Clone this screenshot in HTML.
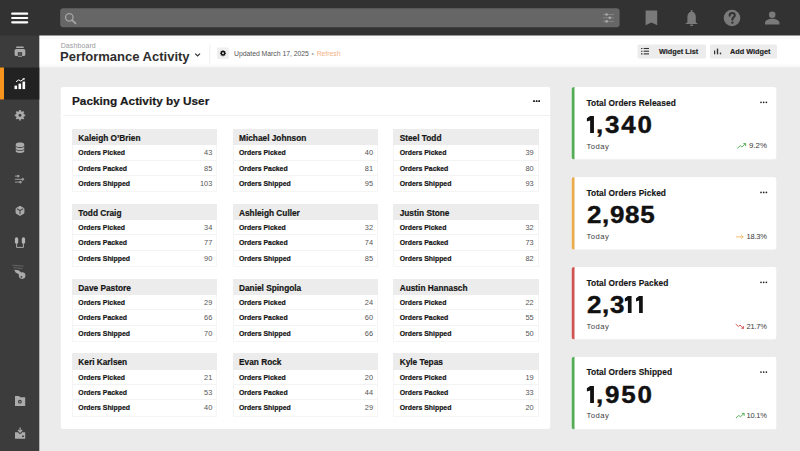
<!DOCTYPE html>
<html><head><meta charset="utf-8">
<style>
*{margin:0;padding:0;box-sizing:border-box}
html,body{width:800px;height:451px;overflow:hidden;background:#ebebeb;font-family:"Liberation Sans",sans-serif;color:#1a1a1a}
.abs{position:absolute}
#top{left:0;top:0;width:800px;height:35.5px;background:#323232}
#side{left:0;top:35.5px;width:39.5px;height:416px;background:#3c3c3c}
#act{left:0;top:67.5px;width:39.5px;height:32px;background:#222222}
#actb{left:0;top:67.5px;width:4px;height:32px;background:#f7941d}
#hdr{left:39.5px;top:35.5px;width:761px;height:32px;background:linear-gradient(to bottom,#fff 0,#f9f9f9 2.5px,#fff 4px,#fff 28px,#f5f5f5 32px)}
#search{left:60.2px;top:8.2px;width:559.4px;height:19px;background:#666666;border-radius:3px}
.card{background:#fff;border-radius:2px}
#pack{left:61px;top:87px;width:489px;height:342px}
.ptitle{left:72px;top:94.2px;font-size:11.8px;font-weight:bold;color:#1a1a1a;white-space:nowrap;letter-spacing:0;-webkit-text-stroke:0.2px #1a1a1a}
.tbl{width:145.5px;border:1px solid #f5f5f5;border-top:0}
.th{height:16.3px;background:#ececec;font-size:8.3px;font-weight:bold;padding-left:6.5px;line-height:18.6px;white-space:nowrap;color:#151515;margin:0 -1px;-webkit-text-stroke:0.2px #151515}
.tr{height:15.4px;border-bottom:1px solid #f3f3f3;font-size:6.9px;line-height:15.4px;padding:0 4px 0 5.5px;display:flex;justify-content:space-between;white-space:nowrap}
.tr:last-child{border-bottom:0}
.tr b{font-weight:bold;color:#151515;-webkit-text-stroke:0.2px #151515;transform:translateY(0.3px)}
.tr span{font-weight:normal;color:#555;font-size:7.4px;transform:translateY(0.3px)}
.kpi{left:571.5px;width:205px;height:72.6px;border-left:3px solid transparent;background:none!important}
.kt{position:absolute;left:12px;top:10.7px;font-size:8.35px;font-weight:bold;white-space:nowrap;letter-spacing:0.07px;color:#151515;-webkit-text-stroke:0.15px #151515}
.kv{position:absolute;left:12.5px;top:25px;font-size:23.2px;font-weight:bold;white-space:nowrap;color:#111;letter-spacing:0.6px;-webkit-text-stroke:0.4px #111;transform:scaleX(1.12);transform-origin:0 0}
.kd{position:absolute;left:12px;top:54.6px;font-size:7.7px;color:#3f3f3f;letter-spacing:0.45px}
.kp{position:absolute;right:9.6px;top:54.6px;font-size:7.5px;color:#3a3a3a;white-space:nowrap;letter-spacing:-0.15px}
.kdots{position:absolute;right:10px;top:14px}
svg{position:absolute;left:0;top:0;overflow:visible}
.one{display:inline-block;width:9.6px;height:17px;position:relative;font-style:normal;vertical-align:baseline;margin-bottom:-0.3px}
.one svg{position:absolute;left:0;top:0;fill:#111}
</style></head><body>
<svg width="800" height="451" viewBox="0 0 800 451">
 <defs><linearGradient id="hg" x1="0" y1="0" x2="0" y2="1">
  <stop offset="0.1467" stop-color="#fff"/><stop offset="0.2133" stop-color="#f9f9f9"/><stop offset="0.253" stop-color="#fff"/><stop offset="0.893" stop-color="#fff"/><stop offset="1" stop-color="#f4f4f4"/>
 </linearGradient><clipPath id="k0"><rect x="571.5" y="87" width="205" height="72.6" rx="3"/></clipPath><clipPath id="k1"><rect x="571.5" y="177.1" width="205" height="72.6" rx="3"/></clipPath><clipPath id="k2"><rect x="571.5" y="267" width="205" height="72.6" rx="3"/></clipPath><clipPath id="k3"><rect x="571.5" y="356.8" width="205" height="72.6" rx="3"/></clipPath></defs>
 <rect x="30" y="30" width="770" height="37.5" fill="url(#hg)"/>
 <rect x="0" y="30" width="39.3" height="421" fill="#3c3c3c"/>
 <rect x="0" y="0" width="800" height="35.5" fill="#323232"/>
 <rect x="0" y="67.5" width="39.3" height="32" fill="#222222"/>
 <rect x="0" y="67.5" width="4" height="32" fill="#f7941d"/>
 <rect x="60.2" y="8.2" width="559.4" height="19" rx="3" fill="#666666"/>
 <rect x="60.8" y="87" width="489.4" height="342.1" rx="2" fill="#fff"/>
 <g clip-path="url(#k0)"><rect x="571.5" y="87" width="205" height="72.6" fill="#fff"/><rect x="571.5" y="87" width="3" height="72.6" fill="#52ad55"/></g>
 <g clip-path="url(#k1)"><rect x="571.5" y="177.1" width="205" height="72.6" fill="#fff"/><rect x="571.5" y="177.1" width="3" height="72.6" fill="#ebab4c"/></g>
 <g clip-path="url(#k2)"><rect x="571.5" y="267" width="205" height="72.6" fill="#fff"/><rect x="571.5" y="267" width="3" height="72.6" fill="#cf5350"/></g>
 <g clip-path="url(#k3)"><rect x="571.5" y="356.8" width="205" height="72.6" fill="#fff"/><rect x="571.5" y="356.8" width="3" height="72.6" fill="#52ad55"/></g>
</svg>

<svg width="800" height="451" viewBox="0 0 800 451">
 <!-- hamburger -->
 <g stroke="#fff" stroke-width="2.2" stroke-linecap="round">
  <line x1="12.2" y1="13.7" x2="27.2" y2="13.7"/><line x1="12.2" y1="18" x2="27.2" y2="18"/><line x1="12.2" y1="22.3" x2="27.2" y2="22.3"/>
 </g>
 <!-- search icon -->
 <g stroke="#a5a5a5" fill="none" stroke-width="1.3"><circle cx="69.3" cy="17.3" r="3.75"/><line x1="72.1" y1="20.1" x2="75.5" y2="23.4" stroke-width="1.7" stroke-linecap="round"/></g>
 <!-- filter icon -->
 <g stroke="#8a8a8a" stroke-width="0.8" fill="#a8a8a8">
  <line x1="603" y1="14.5" x2="614" y2="14.5"/><line x1="603" y1="17.8" x2="614" y2="17.8"/><line x1="603" y1="21.4" x2="614" y2="21.4"/>
  <circle cx="606.6" cy="14.5" r="1.35" stroke="none"/><circle cx="609.8" cy="17.8" r="1.35" stroke="none"/><circle cx="606.6" cy="21.4" r="1.35" stroke="none"/>
 </g>
 <!-- bookmark -->
 <path d="M645.6 10.4 H657.2 V25.3 L651.4 22.5 L645.6 25.3 Z" fill="#7a7a7a"/>
 <!-- bell -->
 <circle cx="691.6" cy="11" r="1" fill="#7a7a7a"/>
 <path d="M687.4 22.2 V16.8 C687.4 13.9 689.1 11.8 691.6 11.8 C694.1 11.8 695.8 13.9 695.8 16.8 V22.2 L698 24 H685.2 L687.4 22.2 Z" fill="#7a7a7a"/>
 <rect x="690.1" y="24.6" width="3" height="1.3" rx="0.6" fill="#7a7a7a"/>
 <!-- help -->
 <circle cx="732" cy="18" r="8.3" fill="#7a7a7a"/>
 <path d="M729.6 15.7 c0 -1.7 1.1 -2.7 2.6 -2.7 c1.5 0 2.6 1 2.6 2.4 c0 1.8 -2.4 2.1 -2.4 3.9 v0.4" stroke="#323232" stroke-width="2" fill="none" stroke-linecap="round"/>
 <circle cx="732.4" cy="22.7" r="1.15" fill="#323232"/>
 <!-- user -->
 <circle cx="772.2" cy="14.7" r="3.3" fill="#7a7a7a"/>
 <path d="M765 24.6 v-1.6 c0 -2.6 3.2 -4.3 7.2 -4.3 c4 0 7.2 1.7 7.2 4.3 v1.6 z" fill="#7a7a7a"/>

 <!-- sidebar icons -->
 <g fill="#ababab">
  <!-- printer -->
  <rect x="16.2" y="46.4" width="7.5" height="1.7" rx="0.4"/>
  <rect x="14.6" y="49" width="10.7" height="7" rx="1.6"/>
  <rect x="17.8" y="52.2" width="4.3" height="4.2" fill="#3c3c3c"/>
  <rect x="18.6" y="53.6" width="2.7" height="0.8" fill="#777"/>
  <rect x="17.8" y="55.8" width="4.3" height="0.9"/>
  <!-- gear -->
  <path d="M19.16 111.29 L19.13 110.07 L20.87 110.07 L20.84 111.29 L22.24 111.87 L23.08 110.99 L24.31 112.22 L23.43 113.06 L24.01 114.46 L25.23 114.43 L25.23 116.17 L24.01 116.14 L23.43 117.54 L24.31 118.38 L23.08 119.61 L22.24 118.73 L20.84 119.31 L20.87 120.53 L19.13 120.53 L19.16 119.31 L17.76 118.73 L16.92 119.61 L15.69 118.38 L16.57 117.54 L15.99 116.14 L14.77 116.17 L14.77 114.43 L15.99 114.46 L16.57 113.06 L15.69 112.22 L16.92 110.99 L17.76 111.87 Z M21.50 115.30 A1.5 1.5 0 1 0 18.50 115.30 A1.5 1.5 0 1 0 21.50 115.30 Z" fill-rule="evenodd"/>
  <!-- database -->
  <path d="M15.75 144.1 c0 -1 1.9 -1.7 4.25 -1.7 c2.35 0 4.25 0.7 4.25 1.7 v1.4 c0 1 -1.9 1.6 -4.25 1.6 c-2.35 0 -4.25 -0.6 -4.25 -1.6 z"/>
  <path d="M15.75 146.3 c0 1 1.9 1.6 4.25 1.6 c2.35 0 4.25 -0.6 4.25 -1.6 v2.1 c0 1 -1.9 1.6 -4.25 1.6 c-2.35 0 -4.25 -0.6 -4.25 -1.6 z"/>
  <path d="M15.75 149.2 c0 1 1.9 1.6 4.25 1.6 c2.35 0 4.25 -0.6 4.25 -1.6 v2.1 c0 1 -1.9 1.6 -4.25 1.6 c-2.35 0 -4.25 -0.6 -4.25 -1.6 z"/>
  <!-- cube -->
  <path d="M20 206.3 L23.9 208.5 V213.2 L20 215.4 L16.1 213.2 V208.5 Z" stroke="#ababab" stroke-width="1" stroke-linejoin="round"/>
  <path d="M16.9 208.8 L20 210.5 L23.1 208.8 M20 210.5 V214.3" stroke="#4a4a4a" stroke-width="1.1" fill="none"/>
  <!-- magnet -->
  <rect x="14.9" y="237.3" width="3.3" height="6.5" rx="1.65" fill="#b5b5b5"/>
  <rect x="21.8" y="237.3" width="3.3" height="6.5" rx="1.65" fill="#b5b5b5"/>
  <path d="M16.6 243.4 V247.4 H23.4 V243.4" stroke="#ababab" stroke-width="1" fill="none"/>
  <!-- folder -->
  <path d="M15 396 h4 l1.2 1.2 h5 v8.8 h-10.2 z"/>
  <circle cx="19.9" cy="401.7" r="1.9" fill="#3c3c3c"/><circle cx="19.9" cy="401.7" r="0.8"/>
  <!-- tray -->
  <path d="M15 432.2 h3.2 l0.8 1.6 h2.2 l0.8 -1.6 h3.2 v6.6 h-10.2 z"/>
  <path d="M20.1 427.6 v4.4 M18 430 l2.1 2.2 l2.1 -2.2" stroke="#ababab" stroke-width="1.2" fill="none"/>
  <rect x="22" y="435.6" width="2" height="1.4" fill="#3c3c3c"/>
 </g>
 <!-- arrows icon -->
 <g stroke="#a5a5a5" stroke-width="0.9" fill="#a5a5a5">
  <line x1="14.9" y1="176.1" x2="18.3" y2="176.1"/><path d="M17.8 175 l1.6 1.1 l-1.6 1.1 z"/>
  <line x1="14.9" y1="179.3" x2="23" y2="179.3"/><path d="M22.4 178.2 l1.7 1.1 l-1.7 1.1 z"/>
  <line x1="14.9" y1="182.1" x2="20.6" y2="182.1"/><path d="M20 181 l1.7 1.1 l-1.7 1.1 z"/>
 </g>
 <!-- delivery icon -->
 <g fill="#ababab">
  <path d="M12.5 265.2 L23.5 266.2" stroke="#707070" stroke-width="0.8"/>
  <path d="M13.5 267.6 L22.5 268.6" stroke="#707070" stroke-width="0.8"/>
  <path d="M14.2 269.8 L18.8 270.2 L21.2 272.4 L19.6 274.8 L15.6 272.6 Z"/>
  <circle cx="22.1" cy="275.6" r="3.3"/>
  <circle cx="21.4" cy="276.8" r="0.9" fill="#3c3c3c"/>
 </g>
 <!-- analytics (active) -->
 <g fill="#fff">
  <rect x="14.5" y="85.6" width="2.6" height="3.5"/>
  <rect x="18.5" y="83.6" width="2.6" height="5.5"/>
  <rect x="22.5" y="81.6" width="2.6" height="7.5"/>
  <path d="M16 81.8 l2.7 -1.9 l2.1 1.2 l2.6 -1.9" stroke="#fff" stroke-width="1" fill="none"/>
  <path d="M22.3 78.6 l2.5 -0.7 l-0.6 2.5 z"/>
 </g>
 <!-- chevron -->
 <path d="M195.2 53.6 l2.4 2.3 l2.4 -2.3" stroke="#333" stroke-width="1.3" fill="none"/>
 <!-- separator -->
 <rect x="209.3" y="44.5" width="1" height="19" fill="#eeeeee"/>
 <!-- gear box -->
 <rect x="217" y="47.5" width="12" height="11.5" rx="1" fill="#efefef"/>
 <path d="M222.51 50.85 L222.49 50.14 L223.51 50.14 L223.49 50.85 L224.31 51.19 L224.80 50.68 L225.52 51.40 L225.01 51.89 L225.35 52.71 L226.06 52.69 L226.06 53.71 L225.35 53.69 L225.01 54.51 L225.52 55.00 L224.80 55.72 L224.31 55.21 L223.49 55.55 L223.51 56.26 L222.49 56.26 L222.51 55.55 L221.69 55.21 L221.20 55.72 L220.48 55.00 L220.99 54.51 L220.65 53.69 L219.94 53.71 L219.94 52.69 L220.65 52.71 L220.99 51.89 L220.48 51.40 L221.20 50.68 L221.69 51.19 Z M223.95 53.20 A0.95 0.95 0 1 0 222.05 53.20 A0.95 0.95 0 1 0 223.95 53.20 Z" fill="#111" fill-rule="evenodd"/>
 <!-- buttons -->
 <rect x="637.5" y="44.5" width="68.5" height="14" rx="1.5" fill="#ececec"/>
 <rect x="710" y="44.5" width="67" height="14" rx="1.5" fill="#ececec"/>
 <g stroke="#333" stroke-width="1.1">
  <line x1="643.6" y1="48.5" x2="649" y2="48.5"/><line x1="643.6" y1="51.2" x2="649" y2="51.2"/><line x1="643.6" y1="53.9" x2="649" y2="53.9"/>
  <line x1="641" y1="48.5" x2="642.4" y2="48.5"/><line x1="641" y1="51.2" x2="642.4" y2="51.2"/><line x1="641" y1="53.9" x2="642.4" y2="53.9"/>
 </g>
 <g fill="#333">
  <rect x="714" y="50.5" width="1.2" height="3.8"/><rect x="716.8" y="48.6" width="1.4" height="5.7"/><rect x="719.8" y="52.6" width="1.4" height="1.7"/>
 </g>
 <!-- card dots -->
 <g fill="#222">
  <circle cx="534" cy="101.2" r="0.85"/><circle cx="536.6" cy="101.2" r="0.85"/><circle cx="539.2" cy="101.2" r="0.85"/>
 </g>
</svg>

<div class="abs" style="left:60.7px;top:41.5px;font-size:7px;color:#9a9a9a;letter-spacing:0.1px">Dashboard</div>
<div class="abs" style="left:60px;top:48.5px;font-size:13px;font-weight:bold;color:#2e2e2e;white-space:nowrap">Performance Activity</div>
<div class="abs" style="left:234px;top:49.6px;font-size:6.85px;color:#555;white-space:nowrap;letter-spacing:-0.02px">Updated March 17, 2025 <span style="color:#aaa;margin-left:0.8px">•</span> <span style="color:#f4b286;margin-left:0.8px">Refresh</span></div>
<div class="abs" style="left:659px;top:46.5px;font-size:7.3px;font-weight:bold;color:#222;white-space:nowrap;-webkit-text-stroke:0.15px #222">Widget List</div>
<div class="abs" style="left:730px;top:46.5px;font-size:7.3px;font-weight:bold;color:#222;white-space:nowrap;-webkit-text-stroke:0.15px #222">Add Widget</div>

<div class="abs ptitle">Packing Activity by User</div>
<div class="abs" style="left:62.5px;top:114.5px;width:487.5px;height:1px;background:#f1f1f1"></div>
<svg width="800" height="451"><g fill="#222"><circle cx="534" cy="101.2" r="0.85"/><circle cx="536.6" cy="101.2" r="0.85"/><circle cx="539.2" cy="101.2" r="0.85"/></g></svg>

<div class="abs tbl" style="left:71.8px;top:128.9px"><div class="th">Kaleigh O’Brien</div><div class="tr"><b>Orders Picked</b><span>43</span></div><div class="tr"><b>Orders Packed</b><span>85</span></div><div class="tr"><b>Orders Shipped</b><span>103</span></div></div>
<div class="abs tbl" style="left:71.8px;top:203.75px"><div class="th">Todd Craig</div><div class="tr"><b>Orders Picked</b><span>34</span></div><div class="tr"><b>Orders Packed</b><span>77</span></div><div class="tr"><b>Orders Shipped</b><span>90</span></div></div>
<div class="abs tbl" style="left:71.8px;top:278.6px"><div class="th">Dave Pastore</div><div class="tr"><b>Orders Picked</b><span>29</span></div><div class="tr"><b>Orders Packed</b><span>66</span></div><div class="tr"><b>Orders Shipped</b><span>70</span></div></div>
<div class="abs tbl" style="left:71.8px;top:353.3px"><div class="th">Keri Karlsen</div><div class="tr"><b>Orders Picked</b><span>21</span></div><div class="tr"><b>Orders Packed</b><span>53</span></div><div class="tr"><b>Orders Shipped</b><span>40</span></div></div>
<div class="abs tbl" style="left:232.5px;top:128.9px"><div class="th">Michael Johnson</div><div class="tr"><b>Orders Picked</b><span>40</span></div><div class="tr"><b>Orders Packed</b><span>81</span></div><div class="tr"><b>Orders Shipped</b><span>95</span></div></div>
<div class="abs tbl" style="left:232.5px;top:203.75px"><div class="th">Ashleigh Culler</div><div class="tr"><b>Orders Picked</b><span>32</span></div><div class="tr"><b>Orders Packed</b><span>74</span></div><div class="tr"><b>Orders Shipped</b><span>85</span></div></div>
<div class="abs tbl" style="left:232.5px;top:278.6px"><div class="th">Daniel Spingola</div><div class="tr"><b>Orders Picked</b><span>24</span></div><div class="tr"><b>Orders Packed</b><span>60</span></div><div class="tr"><b>Orders Shipped</b><span>66</span></div></div>
<div class="abs tbl" style="left:232.5px;top:353.3px"><div class="th">Evan Rock</div><div class="tr"><b>Orders Picked</b><span>20</span></div><div class="tr"><b>Orders Packed</b><span>44</span></div><div class="tr"><b>Orders Shipped</b><span>29</span></div></div>
<div class="abs tbl" style="left:393.2px;top:128.9px"><div class="th">Steel Todd</div><div class="tr"><b>Orders Picked</b><span>39</span></div><div class="tr"><b>Orders Packed</b><span>80</span></div><div class="tr"><b>Orders Shipped</b><span>93</span></div></div>
<div class="abs tbl" style="left:393.2px;top:203.75px"><div class="th">Justin Stone</div><div class="tr"><b>Orders Picked</b><span>32</span></div><div class="tr"><b>Orders Packed</b><span>73</span></div><div class="tr"><b>Orders Shipped</b><span>82</span></div></div>
<div class="abs tbl" style="left:393.2px;top:278.6px"><div class="th">Austin Hannasch</div><div class="tr"><b>Orders Picked</b><span>22</span></div><div class="tr"><b>Orders Packed</b><span>55</span></div><div class="tr"><b>Orders Shipped</b><span>50</span></div></div>
<div class="abs tbl" style="left:393.2px;top:353.3px"><div class="th">Kyle Tepas</div><div class="tr"><b>Orders Picked</b><span>19</span></div><div class="tr"><b>Orders Packed</b><span>33</span></div><div class="tr"><b>Orders Shipped</b><span>20</span></div></div>

<div class="abs card kpi" style="top:87px"><div class="kt">Total Orders Released</div><div class="kv" style="letter-spacing:1.6px"><i class="one" style="width:8px"><svg viewBox="0 0 9.6 17" width="9.6" height="17"><path d="M2.8 0.1 H6.2 V17 H2.8 V4.4 L-0.1 5.6 V2.3 Z"/></svg></i>,340</div><div class="kd">Today</div><div class="kp" style="font-size:7.9px;top:54.3px;letter-spacing:0">9.2%</div></div>
<div class="abs card kpi" style="top:177.1px"><div class="kt">Total Orders Picked</div><div class="kv">2,985</div><div class="kd">Today</div><div class="kp">18.3%</div></div>
<div class="abs card kpi" style="top:267px"><div class="kt">Total Orders Packed</div><div class="kv">2,3<i class="one"><svg viewBox="0 0 9.6 17" width="9.6" height="17"><path d="M2.5 0.1 H5.8 V17 H2.5 V4.4 L-0.2 5.6 V2.3 Z"/></svg></i><i class="one"><svg viewBox="0 0 9.6 17" width="9.6" height="17"><path d="M2.5 0.1 H5.8 V17 H2.5 V4.4 L-0.2 5.6 V2.3 Z"/></svg></i></div><div class="kd">Today</div><div class="kp">21.7%</div></div>
<div class="abs card kpi" style="top:356.8px"><div class="kt">Total Orders Shipped</div><div class="kv" style="letter-spacing:1.6px"><i class="one" style="width:8px"><svg viewBox="0 0 9.6 17" width="9.6" height="17"><path d="M2.8 0.1 H6.2 V17 H2.8 V4.4 L-0.1 5.6 V2.3 Z"/></svg></i>,950</div><div class="kd">Today</div><div class="kp">10.1%</div></div>

<svg width="800" height="451" viewBox="0 0 800 451">
 <g fill="#222">
  <circle cx="761" cy="102.3" r="0.85"/><circle cx="763.7" cy="102.3" r="0.85"/><circle cx="766.4" cy="102.3" r="0.85"/>
  <circle cx="761" cy="192.4" r="0.85"/><circle cx="763.7" cy="192.4" r="0.85"/><circle cx="766.4" cy="192.4" r="0.85"/>
  <circle cx="761" cy="282.3" r="0.85"/><circle cx="763.7" cy="282.3" r="0.85"/><circle cx="766.4" cy="282.3" r="0.85"/>
  <circle cx="761" cy="372.1" r="0.85"/><circle cx="763.7" cy="372.1" r="0.85"/><circle cx="766.4" cy="372.1" r="0.85"/>
  </g>
 <!-- trend icons -->
 <path d="M0 4.6 L2.9 1.8 L4.5 3.2 L8.2 -0.2 M5.9 -0.2 H8.3 V2.2" stroke="#52ad55" stroke-width="0.95" fill="none" stroke-linejoin="round" transform="translate(737.4 143.8)"/>
 <path d="M0 2.3 H7.2 M5.2 0.4 L7.3 2.3 L5.2 4.2" stroke="#f2b552" stroke-width="0.85" fill="none" transform="translate(735.9 234.6)"/>
 <path d="M0.2 0.4 L2.9 2.9 L4.5 1.5 L8 4.7 M5.9 4.7 H8.1 V2.5" stroke="#cf5350" stroke-width="0.95" fill="none" stroke-linejoin="round" transform="translate(735.5 323.6)"/>
 <path d="M0 4.6 L2.9 1.8 L4.5 3.2 L8.2 -0.2 M5.9 -0.2 H8.3 V2.2" stroke="#52ad55" stroke-width="0.95" fill="none" stroke-linejoin="round" transform="translate(735.9 413.6)"/>
</svg>
</body></html>
